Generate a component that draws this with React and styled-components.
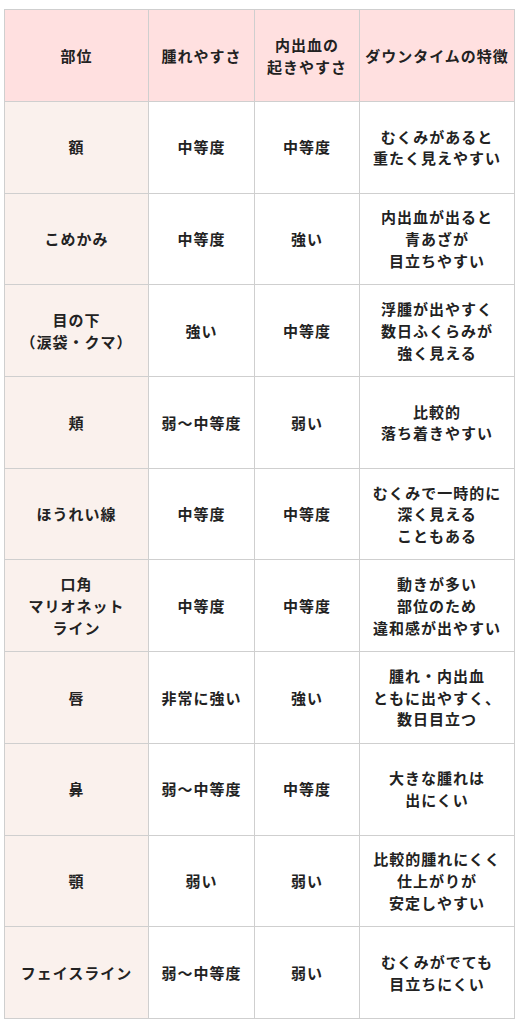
import React from "react";
import styled, { createGlobalStyle } from "styled-components";

const GlobalStyle = createGlobalStyle`
  html, body {
    margin: 0;
    padding: 0;
    background: #ffffff;
  }
  body {
    font-family: "Noto Sans CJK JP", "Noto Sans", sans-serif;
  }
`;

const Page = styled.div`
  padding: 9px 6px 6px 4px;
`;

const Table = styled.table`
  width: 510px;
  table-layout: fixed;
  border-collapse: collapse;
  border: 1px solid #cfcfcf;
  font-family: "Noto Sans CJK JP", "Noto Sans", sans-serif;
  font-weight: 700;
  font-size: 15px;
  letter-spacing: 1px;
  line-height: 21.7px;
  color: #222222;
`;

const Col = styled.col`
  width: ${(p) => p.$w}px;
`;

const Row = styled.tr`
  height: ${(p) => (p.$head ? "92px" : "91.7px")};
`;

const HeadCell = styled.th`
  background: #ffe0e0;
  border: 1px solid #cfcfcf;
  text-align: center;
  vertical-align: middle;
  padding: 0 2px;
  font-weight: 700;
  white-space: nowrap;
`;

const Cell = styled.td`
  background: ${(p) => (p.$label ? "#faf1ed" : "#ffffff")};
  border: 1px solid #cfcfcf;
  text-align: center;
  vertical-align: middle;
  padding: 0 2px;
  white-space: nowrap;
`;

const colWidths = [144, 106, 105, 155];

const header = ["部位", "腫れやすさ", ["内出血の", "起きやすさ"], "ダウンタイムの特徴"];

const rows = [
  [["額"], ["中等度"], ["中等度"], ["むくみがあると", "重たく見えやすい"]],
  [["こめかみ"], ["中等度"], ["強い"], ["内出血が出ると", "青あざが", "目立ちやすい"]],
  [["目の下", "（涙袋・クマ）"], ["強い"], ["中等度"], ["浮腫が出やすく", "数日ふくらみが", "強く見える"]],
  [["頬"], ["弱〜中等度"], ["弱い"], ["比較的", "落ち着きやすい"]],
  [["ほうれい線"], ["中等度"], ["中等度"], ["むくみで一時的に", "深く見える", "こともある"]],
  [["口角", "マリオネット", "ライン"], ["中等度"], ["中等度"], ["動きが多い", "部位のため", "違和感が出やすい"]],
  [["唇"], ["非常に強い"], ["強い"], ["腫れ・内出血", "ともに出やすく、", "数日目立つ"]],
  [["鼻"], ["弱〜中等度"], ["中等度"], ["大きな腫れは", "出にくい"]],
  [["顎"], ["弱い"], ["弱い"], ["比較的腫れにくく", "仕上がりが", "安定しやすい"]],
  [["フェイスライン"], ["弱〜中等度"], ["弱い"], ["むくみがでても", "目立ちにくい"]],
];

const Lines = ({ lines }) => {
  const arr = Array.isArray(lines) ? lines : [lines];
  return arr.map((l, i) => (
    <React.Fragment key={i}>
      {i > 0 && <br />}
      {l}
    </React.Fragment>
  ));
};

export default function App() {
  return (
    <Page>
      <GlobalStyle />
      <Table>
        <colgroup>
          {colWidths.map((w, i) => (
            <Col key={i} $w={w} />
          ))}
        </colgroup>
        <thead>
          <Row $head>
            {header.map((h, i) => (
              <HeadCell key={i}>
                <Lines lines={h} />
              </HeadCell>
            ))}
          </Row>
        </thead>
        <tbody>
          {rows.map((r, ri) => (
            <Row key={ri}>
              {r.map((c, ci) => (
                <Cell key={ci} $label={ci === 0}>
                  <Lines lines={c} />
                </Cell>
              ))}
            </Row>
          ))}
        </tbody>
      </Table>
    </Page>
  );
}
